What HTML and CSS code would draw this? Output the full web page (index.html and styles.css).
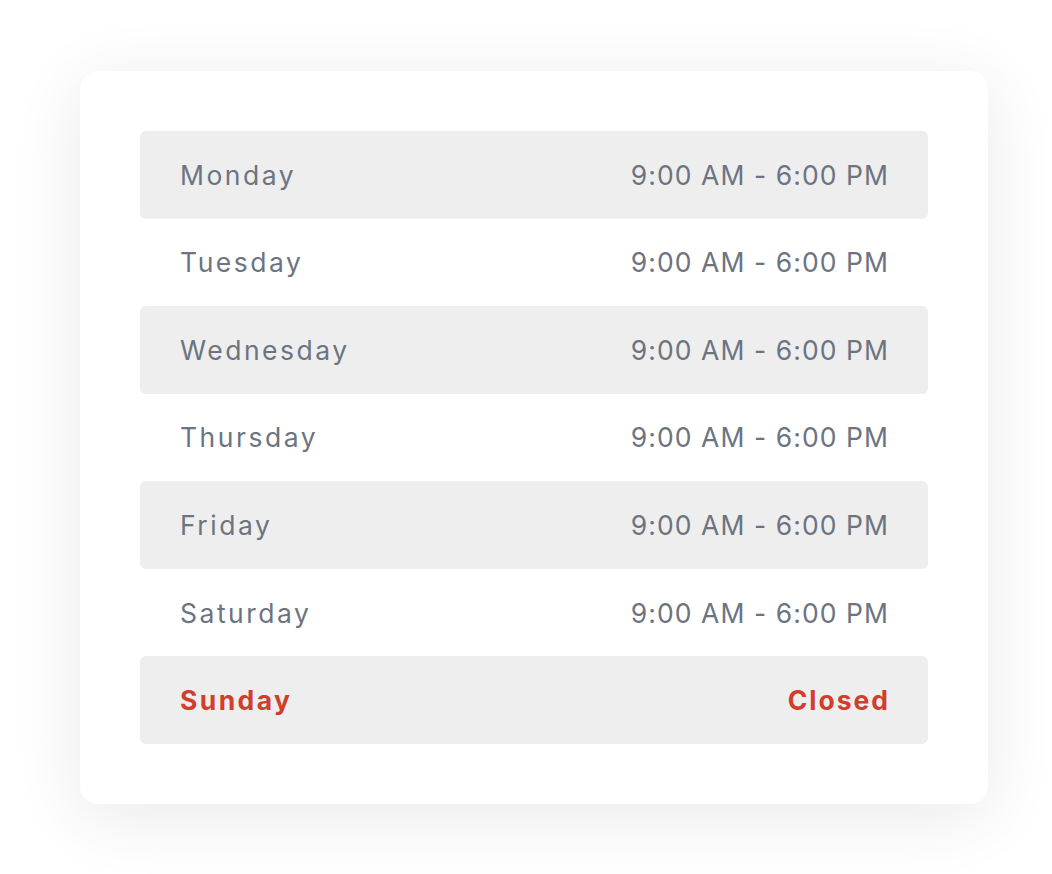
FILE: index.html
```html
<!DOCTYPE html>
<html lang="en">
<head>
<meta charset="utf-8">
<title>Opening Hours</title>
<link rel="stylesheet" href="styles.css">
</head>
<body>
<div class="card">
  <ul class="hours">
    <li class="row shaded"><span class="day">Monday</span><span class="time">9:00 AM - 6:00 PM</span></li>
    <li class="row"><span class="day">Tuesday</span><span class="time">9:00 AM - 6:00 PM</span></li>
    <li class="row shaded"><span class="day">Wednesday</span><span class="time">9:00 AM - 6:00 PM</span></li>
    <li class="row"><span class="day">Thursday</span><span class="time">9:00 AM - 6:00 PM</span></li>
    <li class="row shaded"><span class="day">Friday</span><span class="time">9:00 AM - 6:00 PM</span></li>
    <li class="row"><span class="day">Saturday</span><span class="time">9:00 AM - 6:00 PM</span></li>
    <li class="row shaded closed"><span class="day">Sunday</span><span class="time">Closed</span></li>
  </ul>
</div>
</body>
</html>
```
FILE: styles.css
```css
html, body {
  margin: 0;
  padding: 0;
  background: #ffffff;
}
body {
  font-family: Inter, "Noto Sans", sans-serif;
  width: 1052px;
  height: 874px;
  overflow: hidden;
}
.card {
  margin: 71px 0 0 80px;
  width: 908px;
  box-sizing: border-box;
  padding: 60px;
  background: #ffffff;
  border-radius: 18px;
  box-shadow: 0 12px 70px rgba(0, 0, 0, 0.09);
}
.hours {
  list-style: none;
  margin: 0;
  padding: 0;
}
.row {
  height: 87.57px;
  box-sizing: border-box;
  padding: 0 40px;
  display: flex;
  align-items: center;
  justify-content: space-between;
  border-radius: 6px;
  color: #6b7480;
  font-size: 26.5px;
  font-weight: 400;
}
.row.shaded {
  background: #eeeeee;
}
.day {
  letter-spacing: 2.5px;
}
.time {
  letter-spacing: 1.07px;
  margin-right: -1.07px;
}
.row.closed {
  color: #d13e2d;
  font-weight: 700;
}
.row.closed .day {
  letter-spacing: 2.4px;
}
.row.closed .time {
  letter-spacing: 2px;
  margin-right: -2px;
}
```
